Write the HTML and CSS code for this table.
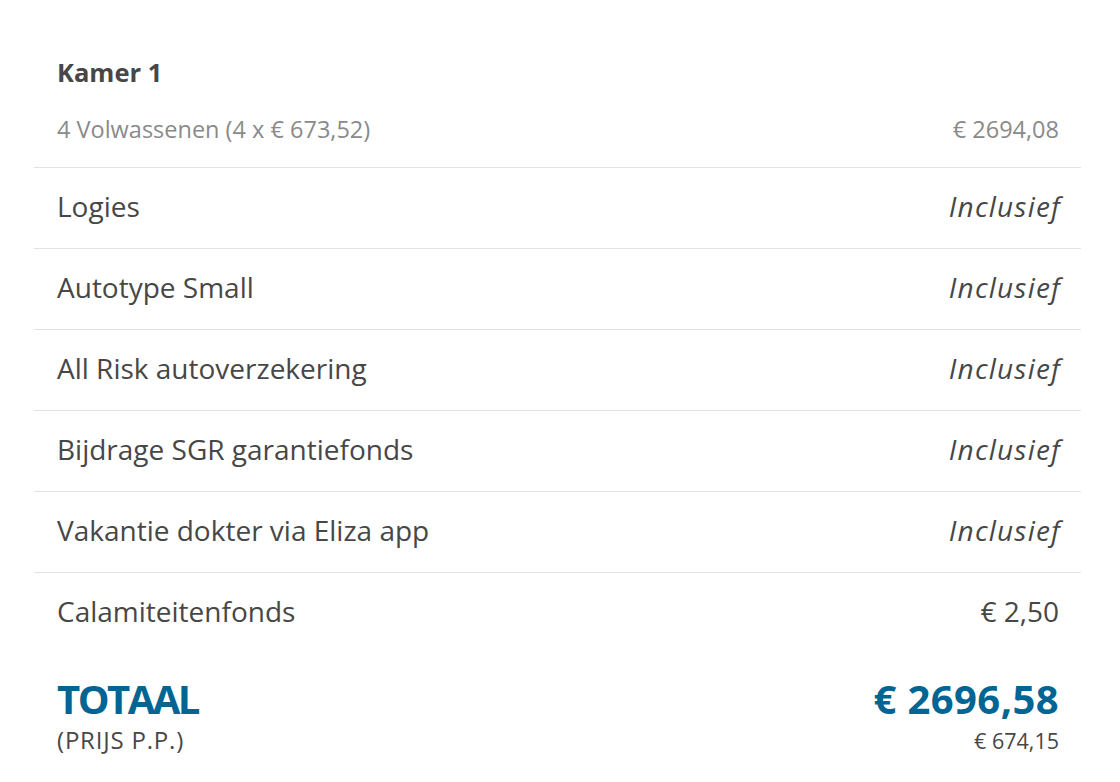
FILE: index.html
```html
<!DOCTYPE html>
<html>
<head>
<link rel="stylesheet" href="styles.css">
</head>
<body>

<div class="summary">
    <div class="room">
        <div class="room-title">Kamer 1</div>
        <div class="room-line">
            <span>4 Volwassenen (4 x € 673,52)</span>
            <span>€ 2694,08</span>
        </div>
    </div>

    <div class="row"><span>Logies</span><span class="incl">Inclusief</span></div>
    <div class="row"><span>Autotype Small</span><span class="incl">Inclusief</span></div>
    <div class="row"><span>All Risk autoverzekering</span><span class="incl">Inclusief</span></div>
    <div class="row"><span>Bijdrage SGR garantiefonds</span><span class="incl">Inclusief</span></div>
    <div class="row"><span>Vakantie dokter via Eliza app</span><span class="incl">Inclusief</span></div>
    <div class="row"><span>Calamiteitenfonds</span><span class="price">€ 2,50</span></div>

    <div class="total">
        <div class="total-main">
            <span class="total-label">TOTAAL</span>
            <span class="total-price">€ 2696,58</span>
        </div>
        <div class="total-sub">
            <span class="pp-label">(PRIJS P.P.)</span>
            <span class="pp-price">€ 674,15</span>
        </div>
    </div>
</div>

</body>
</html>
```

FILE: styles.css
```css
body {
    background: #fff;
    color: #474747;
    font-family: "Open Sans", "Noto Sans", sans-serif;
    margin: 0;
}

.summary {
    width: 1047px;
    margin-left: 34px;
    padding-top: 52px;
}

.room {
    padding: 0 22px 18px 23px;
}

.room-title {
    font-size: 25.5px;
    font-weight: 700;
    line-height: 40px;
    color: #474747;
}

.room-line {
    display: flex;
    justify-content: space-between;
    font-size: 23.5px;
    line-height: 40px;
    margin-top: 17px;
    color: #8a8a8a;
}

.row {
    display: flex;
    justify-content: space-between;
    align-items: center;
    height: 80px;
    box-sizing: border-box;
    height: 81px;
    border-top: 1px solid #e3e3e3;
    padding: 0 22px 4px 23px;
    font-size: 28px;
}

.incl {
    font-style: italic;
    letter-spacing: 1.2px;
    margin-right: -2px;
}

.total {
    padding: 23px 22px 0 23px;
    color: #006592;
}

.total-main {
    display: flex;
    justify-content: space-between;
    font-size: 40px;
    font-weight: 700;
    line-height: 46px;
}

.total-label {
    letter-spacing: -2.5px;
}

.total-price {
    letter-spacing: 0.4px;
}

.total-sub {
    display: flex;
    justify-content: space-between;
    align-items: baseline;
    line-height: 30px;
    margin-top: 3px;
    color: #474747;
}

.pp-label {
    font-size: 24px;
    letter-spacing: 0.8px;
}

.pp-price {
    font-size: 21.5px;
}
```
